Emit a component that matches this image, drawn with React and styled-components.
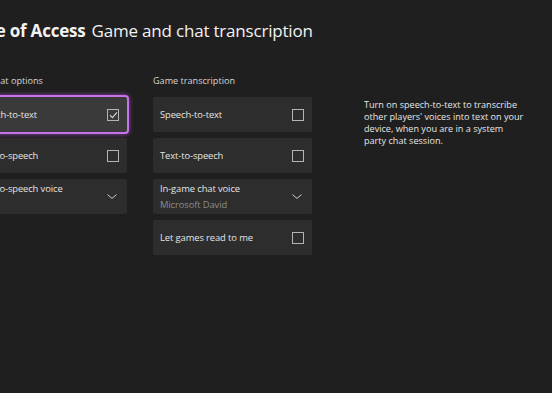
import React from 'react'
import styled, { createGlobalStyle } from 'styled-components'

const GlobalStyle = createGlobalStyle`
  html, body {
    margin: 0;
    padding: 0;
    background: #1f1f1f;
    overflow: hidden;
  }
  body {
    font-family: 'Open Sans', 'Noto Sans', sans-serif;
    color: #e8e8e8;
  }
`

const Page = styled.div`
  width: 584px;
  height: 393px;
  margin-left: -32px;
  padding-top: 19px;
  box-sizing: border-box;
`

const Title = styled.h1`
  margin: 0;
  font-size: 17px;
  line-height: 24px;
  font-weight: 400;
  letter-spacing: -0.2px;
  color: #f2f2f2;
  white-space: nowrap;

  b {
    font-weight: 700;
    margin-right: 6px;
  }
`

const Columns = styled.div`
  display: flex;
  gap: 26px;
  margin-top: 32px;
`

const Column = styled.div`
  width: 159px;
  display: flex;
  flex-direction: column;
  gap: 6px;
`

const Label = styled.div`
  font-size: 9.1px;
  line-height: 12px;
  color: #d6d6d6;
  margin-bottom: 4px;
  padding-left: ${p => p.$indent || 0}px;
`

const Tile = styled.div`
  height: 35px;
  box-sizing: border-box;
  padding: 0 8px 0 7px;
  display: flex;
  align-items: center;
  justify-content: space-between;
  background: ${p => (p.$focused ? '#3a3a3a' : '#2d2d2d')};
  border-radius: 2px;
  ${p => p.$focused && `
    box-shadow: 0 0 0 2px #c672e8, 0 0 5px 2px rgba(190, 90, 230, 0.7);
  `}
`

const TileText = styled.div`
  display: flex;
  flex-direction: column;
  font-size: 9.4px;
  line-height: 14px;
  letter-spacing: -0.1px;
  color: #e4e4e4;
`

const SubText = styled.span`
  color: #8c8c8c;
  margin-top: 2px;
`

const Box = styled.div`
  width: 12px;
  height: 12px;
  box-sizing: border-box;
  border: 1.5px solid #b4b4b4;
  display: flex;
  align-items: center;
  justify-content: center;
`

const Desc = styled.p`
  width: 180px;
  margin: 0 0 0 26px;
  padding-top: 24px;
  font-size: 9.1px;
  line-height: 12px;
  color: #e6e6e6;
  white-space: nowrap;
`

const Check = () => (
  <svg width="9" height="8" viewBox="0 0 9 8">
    <path d="M1 4.2 L3.4 6.6 L8 1.4" fill="none" stroke="#d8d8d8" strokeWidth="1.1" />
  </svg>
)

const Chevron = () => (
  <svg width="10" height="5" viewBox="0 0 10 5" style={{ marginRight: 2 }}>
    <path d="M0.5 0.6 L5 4.4 L9.5 0.6" fill="none" stroke="#cfcfcf" strokeWidth="1" />
  </svg>
)

const CheckRow = ({ label, checked, focused }) => (
  <Tile $focused={focused}>
    <TileText>{label}</TileText>
    <Box>{checked && <Check />}</Box>
  </Tile>
)

const SelectRow = ({ label, value }) => (
  <Tile>
    <TileText>
      <span>{label}</span>
      <SubText>{value || '\u00a0'}</SubText>
    </TileText>
    <Chevron />
  </Tile>
)

export default function App() {
  return (
    <>
      <GlobalStyle />
      <Page>
        <Title>
          <b>Ease of Access</b>Game and chat transcription
        </Title>
        <Columns>
          <Column>
            <Label $indent={21}>Chat options</Label>
            <CheckRow label="Speech-to-text" checked focused />
            <CheckRow label="Text-to-speech" />
            <SelectRow label="Text-to-speech voice" />
          </Column>
          <Column>
            <Label>Game transcription</Label>
            <CheckRow label="Speech-to-text" />
            <CheckRow label="Text-to-speech" />
            <SelectRow label="In-game chat voice" value="Microsoft David" />
            <CheckRow label="Let games read to me" />
          </Column>
          <Desc>
            Turn on speech-to-text to transcribe<br />
            other players' voices into text on your<br />
            device, when you are in a system<br />
            party chat session.
          </Desc>
        </Columns>
      </Page>
    </>
  )
}
